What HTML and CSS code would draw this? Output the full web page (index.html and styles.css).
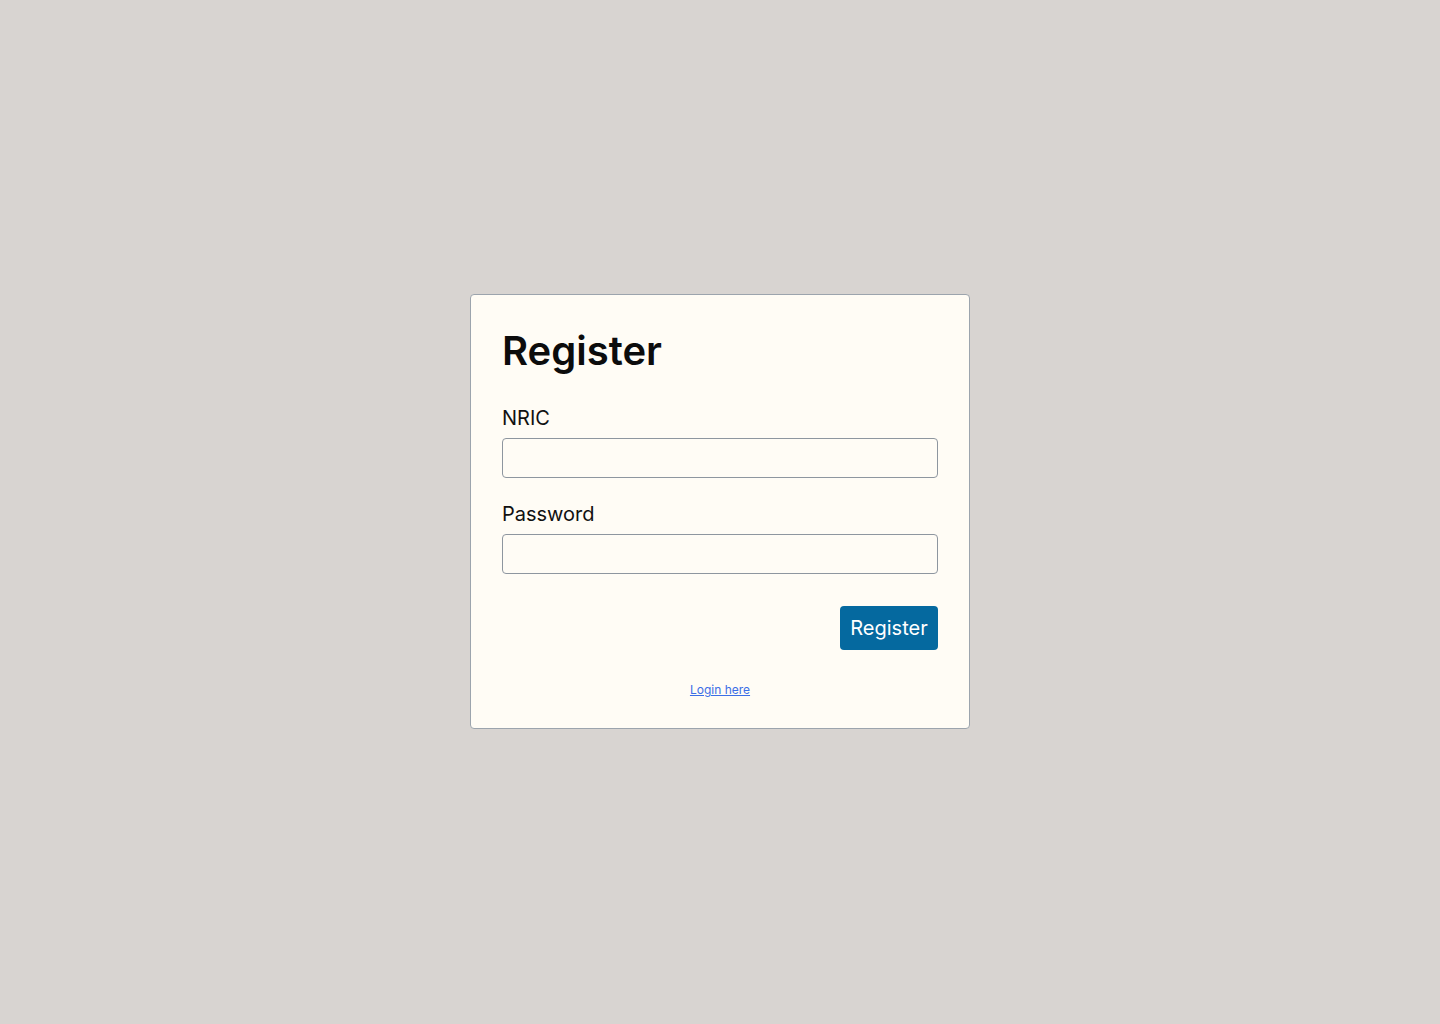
FILE: index.html
```html
<!DOCTYPE html>
<html lang="en">
<head>
<meta charset="utf-8">
<title>Register</title>
<link rel="stylesheet" href="styles.css">
</head>
<body>
<main class="page">
  <form class="card">
    <h1 class="title">Register</h1>
    <div class="field">
      <label class="label" for="nric">NRIC</label>
      <input class="input" id="nric" type="text">
    </div>
    <div class="field">
      <label class="label" for="password">Password</label>
      <input class="input" id="password" type="password">
    </div>
    <div class="actions">
      <button class="btn" type="button">Register</button>
    </div>
    <div class="footer">
      <a class="link" href="#">Login here</a>
    </div>
  </form>
</main>
</body>
</html>
```
FILE: styles.css
```css
* { box-sizing: border-box; }
html, body { margin: 0; padding: 0; }
body {
  background: #d8d4d1;
  font-family: Inter, "Noto Sans", sans-serif;
  color: #111;
}
.page {
  min-height: 1023px;
  display: flex;
  align-items: center;
  justify-content: center;
}
.card {
  width: 500px;
  background: #fffcf5;
  border: 1px solid #9ca4ad;
  border-radius: 4px;
  padding: 31px 31px 31px;
  display: flex;
  flex-direction: column;
}
.title {
  margin: 0 0 28px;
  font-size: 40px;
  line-height: 50px;
  font-weight: 600;
  color: #0c0c0c;
}
.field {
  display: flex;
  flex-direction: column;
  gap: 6px;
  margin-bottom: 22px;
}
.field + .field { margin-bottom: 32px; }
.label {
  font-size: 20px;
  line-height: 28px;
  color: #111;
}
.input {
  height: 40px;
  border: 1px solid #8e969f;
  border-radius: 4px;
  background: #fffcf5;
  font: inherit;
  padding: 0 10px;
}
.actions {
  display: flex;
  justify-content: flex-end;
}
.btn {
  height: 44px;
  padding: 0 10px;
  min-width: 98px;
  background: #05699f;
  color: #fff;
  border: none;
  border-radius: 4px;
  font-family: Inter, "Noto Sans", sans-serif;
  font-size: 20px;
  line-height: 24px;
  font-weight: 400;
}
.footer {
  margin-top: 32px;
  display: flex;
  justify-content: center;
}
.link {
  font-size: 12px;
  line-height: 15px;
  color: #3b6ee6;
  text-decoration: underline;
}
```
